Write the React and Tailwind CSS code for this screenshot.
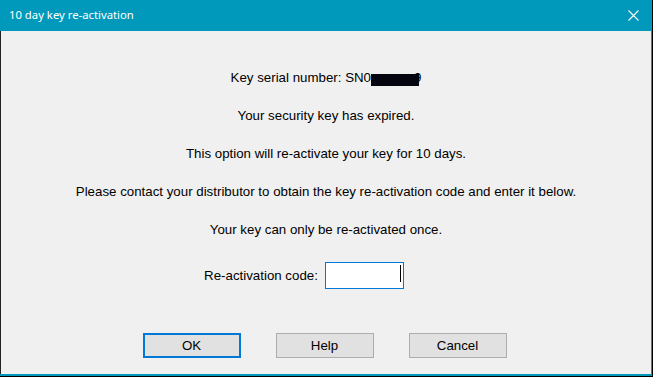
import React from 'react';

const lines = [
    'Your security key has expired.',
    'This option will re-activate your key for 10 days.',
    'Please contact your distributor to obtain the key re-activation code and enter it below.',
    'Your key can only be re-activated once.',
];

const DialogButton = ({ label, primary }) => (
    <button
        className={`w-[98px] h-[25px] bg-[#e1e1e1] text-[13.3px] text-black ${primary ? 'border-2 border-[#0078d7]' : 'border border-[#adadad]'}`}
    >
        {label}
    </button>
);

const App = () => {
    return (
        <div className="w-[653px] h-[377px] bg-black pr-px pb-px overflow-hidden" style={{ fontFamily: '"Liberation Sans", Arial, sans-serif' }}>
            <div className="w-full h-full flex flex-col bg-[#0099bc] pr-px pb-[2px]">
                <div className="h-[31px] shrink-0 flex items-center justify-between pl-[9px] pr-[11px]">
                    <span className="text-white text-[11.3px]" style={{ fontFamily: '"Noto Sans", "Open Sans", sans-serif' }}>
                        10 day key re-activation
                    </span>
                    <svg width="11" height="11" viewBox="0 0 11 11" className="mr-[1px]">
                        <path d="M0.5 0.5 L10.5 10.5 M10.5 0.5 L0.5 10.5" stroke="white" strokeWidth="1.1" />
                    </svg>
                </div>
                <div className="flex-1 bg-[#f0f0f0] border-l border-[#222] flex flex-col items-center pt-[28px] text-[13.3px] text-black">
                    <p className="leading-[38px] flex items-center">
                        <span>Key serial number: SN0</span>
                        <span className="relative z-10 inline-block w-[48px] h-[12px] bg-[#050510] mt-[3px]"></span>
                        <span className="-ml-[5px]">9</span>
                    </p>
                    {lines.map((t, i) => (
                        <p key={i} className="leading-[38px]">{t}</p>
                    ))}
                    <div className="flex items-center gap-[7px] mt-[13px] mr-[44px]">
                        <span>Re-activation code:</span>
                        <div className="relative w-[79px] h-[27px] bg-white border border-[#0078d7]">
                            <span className="absolute right-[2px] top-[2px] w-px h-[17px] bg-black"></span>
                        </div>
                    </div>
                    <div className="flex gap-[35px] mt-[44px] mr-[3px]">
                        <DialogButton label="OK" primary />
                        <DialogButton label="Help" />
                        <DialogButton label="Cancel" />
                    </div>
                </div>
            </div>
        </div>
    );
};

export default App;
